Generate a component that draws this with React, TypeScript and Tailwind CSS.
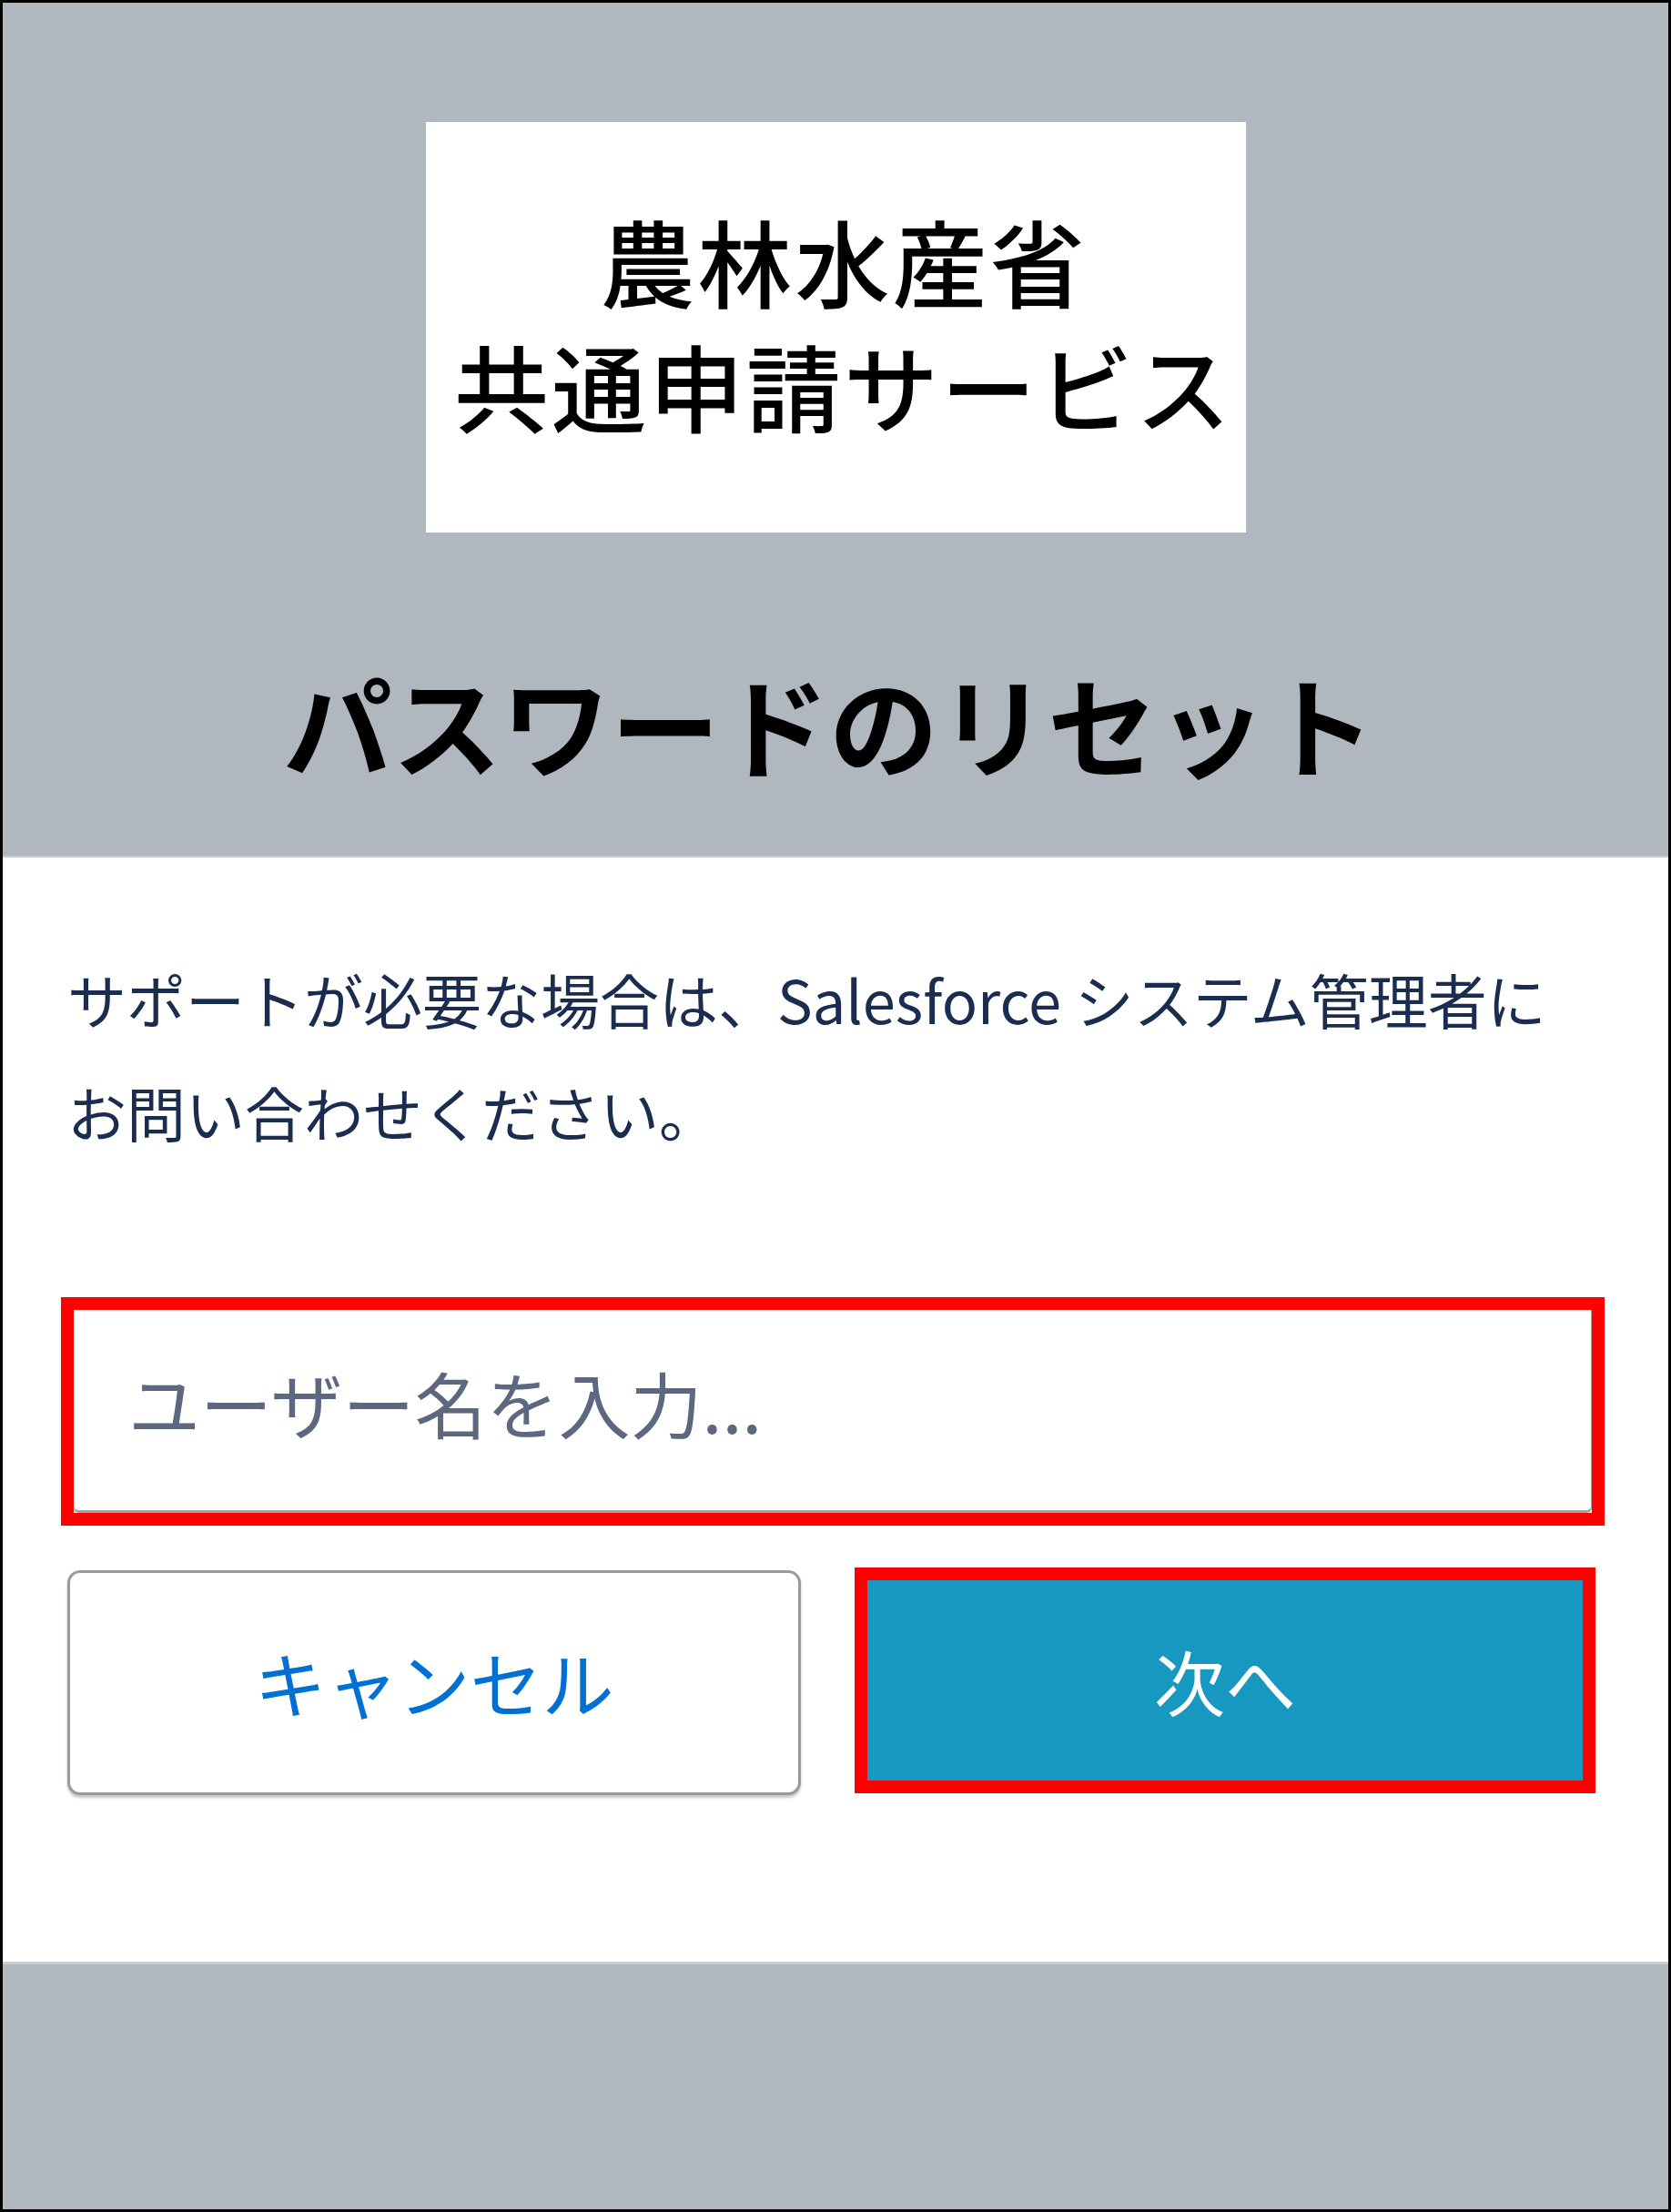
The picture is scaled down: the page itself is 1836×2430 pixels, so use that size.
export default function App() {
  return (
    <div className="w-[1836px] h-[2430px] border-[3px] border-black flex flex-col bg-white font-['Noto_Sans_CJK_JP',sans-serif]">
      <header className="h-[939px] shrink-0 bg-[#b0b7bf] border-b-[2px] border-[#c6cdd6] flex flex-col items-center pt-[131px]">
        <div className="w-[901px] h-[451px] bg-white flex flex-col items-center justify-center gap-[4px] pl-[18px] pb-[12px] text-[104px] leading-[133px] tracking-[3px] font-medium text-black">
          <div>農林水産省</div>
          <div>共通申請サービス</div>
        </div>
        <h1 className="mt-[139px] mr-[14px] text-[120px] leading-[140px] font-bold text-black whitespace-nowrap">
          パスワードのリセット
        </h1>
      </header>

      <main className="flex-1 flex flex-col pl-[71px] pt-[93px]">
        <p className="text-[65px] leading-[124px] text-[#1b2d4f] whitespace-nowrap">
          サポートが必要な場合は、Salesforce システム管理者に
          <br />
          お問い合わせください。
        </p>

        <div className="mt-[142px] -ml-[7px] w-[1696px] h-[251px] border-[14px] border-[#ff0000]">
          <input
            type="text"
            placeholder="ユーザー名を入力..."
            className="w-full h-full bg-white pl-[60px] pb-[18px] text-[79px] text-[#16325c] border-b-[3px] border-r-[1px] border-[#a0a0a0] rounded-b-[6px] outline-none placeholder:text-[#5b6880]"
          />
        </div>

        <div className="mt-[46px] flex gap-[59px]">
          <button className="mt-[3px] w-[806px] h-[247px] bg-white border-[3px] border-[#9a9a9a] rounded-[14px] shadow-[0_3px_3px_rgba(0,0,0,0.22)] text-[79px] text-[#0070d2]">
            キャンセル
          </button>
          <div className="w-[814px] h-[248px] border-[14px] border-[#ff0000]">
            <button className="w-full h-full bg-[#1798c1] text-[78px] text-white">
              次へ
            </button>
          </div>
        </div>
      </main>

      <footer className="h-[272px] shrink-0 bg-[#b0b7bf] border-t-[3px] border-[#c6cdd6]" />
    </div>
  );
}
